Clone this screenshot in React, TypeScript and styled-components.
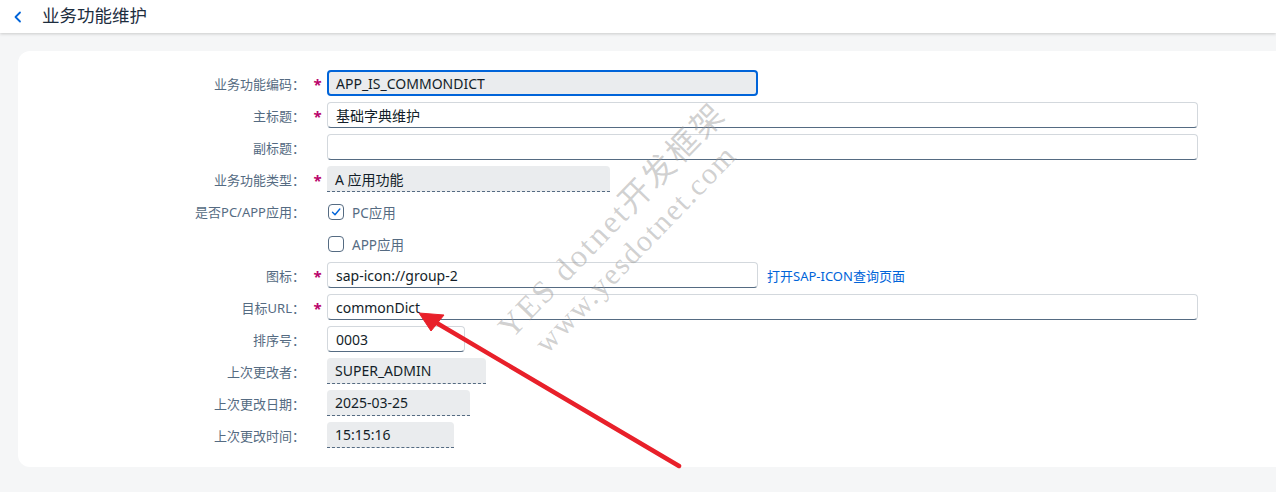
import styled, { createGlobalStyle } from "styled-components";

const GlobalStyle = createGlobalStyle`
    html, body {
        margin: 0;
        padding: 0;
        background: #f5f6f7;
        font-family: "Noto Sans", "Noto Sans CJK SC", sans-serif;
        overflow: hidden;
    }
`;

type FieldKind = "input" | "focus" | "display";

interface Row {
    label: string;
    required?: boolean;
    kind: FieldKind;
    value?: string;
    width: number | "full";
    link?: string;
}

const rows: Row[] = [
    { label: "业务功能编码：", required: true, kind: "focus", value: "APP_IS_COMMONDICT", width: 431 },
    { label: "主标题：", required: true, kind: "input", value: "基础字典维护", width: "full" },
    { label: "副标题：", kind: "input", value: "", width: "full" },
    { label: "业务功能类型：", required: true, kind: "display", value: "A 应用功能", width: 283 },
];

const rows2: Row[] = [
    { label: "图标：", required: true, kind: "input", value: "sap-icon://group-2", width: 431, link: "打开SAP-ICON查询页面" },
    { label: "目标URL：", required: true, kind: "input", value: "commonDict", width: "full" },
    { label: "排序号：", kind: "input", value: "0003", width: 138 },
    { label: "上次更改者：", kind: "display", value: "SUPER_ADMIN", width: 159 },
    { label: "上次更改日期：", kind: "display", value: "2025-03-25", width: 143 },
    { label: "上次更改时间：", kind: "display", value: "15:15:16", width: 127 },
];

const App = () => {
    const renderRow = (r: Row, i: number) => (
        <FormRow key={r.label + i}>
            <Label>{r.label}</Label>
            <Star>{r.required ? "*" : ""}</Star>
            <FieldCell>
                <Field kind={r.kind} w={r.width}>
                    {r.value}
                </Field>
                {r.link && <Link>{r.link}</Link>}
            </FieldCell>
        </FormRow>
    );

    return (
        <Page>
            <GlobalStyle />
            <Header>
                <BackButton>
                    <svg width="10" height="12" viewBox="0 0 10 12">
                        <polyline
                            points="7,1.5 2.5,6 7,10.5"
                            fill="none"
                            stroke="#0064d9"
                            strokeWidth="1.8"
                            strokeLinecap="round"
                            strokeLinejoin="round"
                        />
                    </svg>
                </BackButton>
                <Title>业务功能维护</Title>
            </Header>
            <Body>
                <Card>
                    {rows.map(renderRow)}
                    <FormRow>
                        <Label>是否PC/APP应用：</Label>
                        <Star />
                        <CheckItem>
                            <Box checked>
                                <svg width="12" height="12" viewBox="0 0 12 12">
                                    <polyline
                                        points="2.5,6.2 5,8.7 9.8,3"
                                        fill="none"
                                        stroke="#0064d9"
                                        strokeWidth="1.4"
                                        strokeLinecap="round"
                                        strokeLinejoin="round"
                                    />
                                </svg>
                            </Box>
                            PC应用
                        </CheckItem>
                    </FormRow>
                    <FormRow>
                        <Label />
                        <Star />
                        <CheckItem>
                            <Box />
                            APP应用
                        </CheckItem>
                    </FormRow>
                    {rows2.map(renderRow)}
                    <Watermark>
                        <MarkLine>YES dotnet开发框架</MarkLine>
                        <MarkLine indent={14} small>
                            www.yesdotnet.com
                        </MarkLine>
                    </Watermark>
                </Card>
            </Body>
            <Arrow width="1276" height="492" viewBox="0 0 1276 492">
                <line x1="679" y1="466" x2="435" y2="322" stroke="#e8202a" strokeWidth="4.5" strokeLinecap="round" />
                <polygon points="419,313 444,315 431,331" fill="#e8202a" stroke="#e8202a" strokeWidth="1" strokeLinejoin="round" />
            </Arrow>
        </Page>
    );
};

export default App;

const Page = styled.div`
    position: relative;
    width: 1276px;
    height: 492px;
    overflow: hidden;
    background: #f5f6f7;
`;

const Header = styled.div`
    height: 33px;
    background: #ffffff;
    box-shadow: 0 1px 3px rgba(0, 0, 0, 0.18);
    display: flex;
    align-items: center;
    position: relative;
    z-index: 1;
`;

const BackButton = styled.div`
    width: 42px;
    display: flex;
    justify-content: center;
    padding-right: 6px;
    box-sizing: border-box;
`;

const Title = styled.div`
    font-size: 17.5px;
    color: #1d2d3e;
    line-height: 1;
    margin-top: -2px;
`;

const Body = styled.div`
    padding: 18px 0 0 18px;
`;

const Card = styled.div`
    position: relative;
    background: #ffffff;
    border-radius: 12px;
    margin-right: -20px;
    padding: 19px 0 19px;
    display: grid;
    row-gap: 6px;
`;

const FormRow = styled.div`
    display: grid;
    grid-template-columns: 288px 21px 1fr;
    height: 26px;
    align-items: center;
`;

const Label = styled.div`
    text-align: right;
    font-size: 13px;
    color: #556b82;
    white-space: nowrap;
    padding-right: 1px;
`;

const Star = styled.div`
    color: #ba066c;
    font-size: 15px;
    font-weight: 700;
    text-align: center;
    padding-left: 2px;
    line-height: 1;
    margin-top: 2px;
`;

const FieldCell = styled.div`
    display: flex;
    align-items: center;
    gap: 9px;
    padding-right: 98px;
`;

interface FieldProps {
    kind: FieldKind;
    w: number | "full";
}

const Field = styled.div<FieldProps>`
    box-sizing: border-box;
    height: 26px;
    ${({ w }) => (w === "full" ? "flex: 1;" : `width: ${w}px; flex: none;`)}
    font-size: 14px;
    color: #131e29;
    display: flex;
    align-items: center;
    padding-left: 8px;
    white-space: nowrap;
    ${({ kind }) =>
        kind === "focus"
            ? `
        background: #eaecee;
        border: 2px solid #0064d9;
        border-radius: 4px;
        padding-left: 7px;
    `
            : kind === "display"
            ? `
        background: #eaecee;
        border-radius: 4px 4px 0 0;
        border-bottom: 1px dashed #556b82;
    `
            : `
        background: #ffffff;
        border: 1px solid #d3d8dd;
        border-bottom: 1px solid #556b82;
        border-radius: 4px;
    `}
`;

const Link = styled.span`
    font-size: 13px;
    color: #0064d9;
    white-space: nowrap;
`;

const CheckItem = styled.label`
    display: flex;
    align-items: center;
    gap: 8px;
    font-size: 13.5px;
    color: #556b82;
    padding-left: 1px;
    margin-top: 1px;
`;

const Box = styled.span<{ checked?: boolean }>`
    box-sizing: border-box;
    width: 16px;
    height: 16px;
    border: 1px solid #556b82;
    border-radius: 4px;
    background: #ffffff;
    display: flex;
    align-items: center;
    justify-content: center;
`;

const Watermark = styled.div`
    position: absolute;
    left: 474px;
    top: 270px;
    transform: rotate(-46deg);
    transform-origin: left top;
    display: flex;
    flex-direction: column;
    gap: 6px;
    pointer-events: none;
    font-family: "Liberation Serif", "Noto Sans CJK SC", serif;
    color: rgba(150, 150, 150, 0.45);
    white-space: nowrap;
    line-height: 1;
`;

const MarkLine = styled.span<{ indent?: number; small?: boolean }>`
    display: block;
    padding-left: ${({ indent }) => indent ?? 0}px;
    font-size: ${({ small }) => (small ? 30 : 32)}px;
    letter-spacing: ${({ small }) => (small ? 1.8 : 2.5)}px;
`;

const Arrow = styled.svg`
    position: absolute;
    left: 0;
    top: 0;
    pointer-events: none;
`;
